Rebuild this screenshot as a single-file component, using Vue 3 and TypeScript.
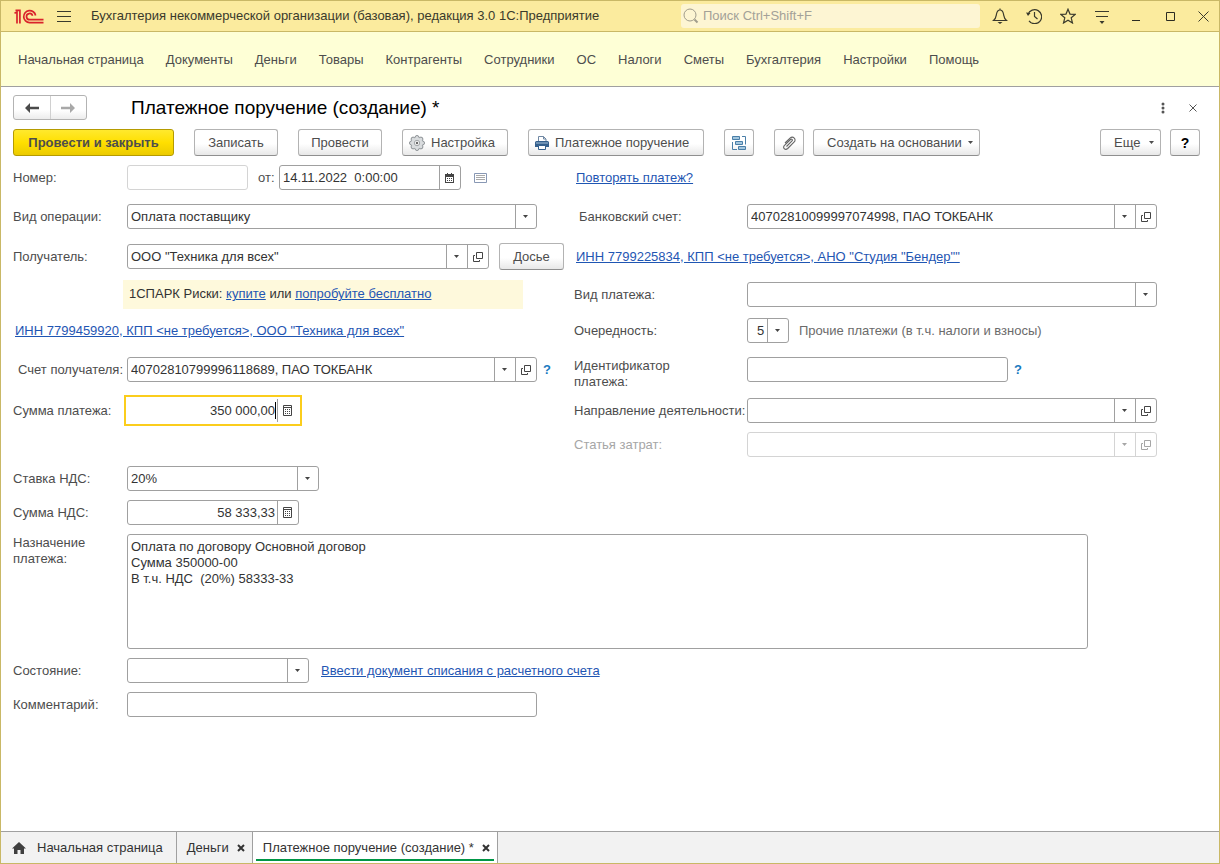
<script setup lang="ts">
import { ref } from 'vue'

const sections: string[] = [
  'Начальная страница', 'Документы', 'Деньги', 'Товары', 'Контрагенты', 'Сотрудники',
  'ОС', 'Налоги', 'Сметы', 'Бухгалтерия', 'Настройки', 'Помощь',
]

const docNumber = ref('')
const docDate = ref('14.11.2022  0:00:00')
const payee = ref('ООО "Техника для всех"')
const payeeAccount = ref('40702810799996118689, ПАО ТОКБАНК')
const bankAccount = ref('40702810099997074998, ПАО ТОКБАНК')
const amount = ref('350 000,00')
const vatAmount = ref('58 333,33')
const identifier = ref('')
const direction = ref('')
const costItem = ref('')
const comment = ref('')
const purpose = ref('Оплата по договору Основной договор\nСумма 350000-00\nВ т.ч. НДС  (20%) 58333-33')
</script>

<template>
  <div class="window">
    <svg class="defs" aria-hidden="true">
      <symbol id="i-down" viewBox="0 0 5 3"><path d="M0 0h5L2.500 3z" fill="currentColor" /></symbol>
      <symbol id="i-open" viewBox="0 0 10 10">
        <path d="M3.500.5h6v6h-6zM2 3.500H.5v6h6V8" fill="none" stroke="currentColor" />
      </symbol>
      <symbol id="i-calc" viewBox="0 0 9 11">
        <path d="M.5.5h8v10h-8zM.5 2.500h8" fill="none" stroke="currentColor" />
        <path d="M2 4h1v1H2zM4 4h1v1H4zM6 4h1v1H6zM2 6h1v1H2zM4 6h1v1H4zM6 6h1v1H6zM2 8h1v1H2zM4 8h1v1H4zM6 8h1v1H6z" fill="currentColor" />
      </symbol>
      <symbol id="i-x" viewBox="0 0 8 8"><path d="M1 1l6 6M7 1L1 7" fill="none" stroke="currentColor" stroke-width="2" /></symbol>
    </svg>

    <header class="titlebar">
      <svg class="logo" viewBox="0 0 30 15" width="30" height="15" fill="none" stroke="#d9232b" stroke-width="1.7">
        <path d="M.5 4.200L3 3v11.500M1.500 1.300h4.400v13.200" />
        <path d="M21.600 6.500A6 6 0 1 0 15.600 13.600H29.500" />
        <path d="M18.600 6.800A3.100 3.100 0 1 0 15.600 10.700H29.500" />
      </svg>
      <button class="burger" aria-label="Меню">
        <svg viewBox="0 0 14 11" width="14" height="11" stroke="#3a3a2c"><path d="M0 .5h14M0 5.500h14M0 10.500h14" /></svg>
      </button>
      <span class="app-name">Бухгалтерия некоммерческой организации (базовая), редакция 3.0 1С:Предприятие</span>
      <label class="search">
        <svg viewBox="0 0 16 16" width="16" height="16" fill="none" stroke="#a09c8c">
          <circle cx="7" cy="7" r="6" /><path d="M11.500 11.500l3 3" stroke-width="2" />
        </svg>
        <input type="search" placeholder="Поиск Ctrl+Shift+F" aria-label="Поиск">
      </label>
      <div class="win-buttons">
        <button aria-label="Уведомления">
          <svg viewBox="0 0 16 16" width="16" height="16" fill="none" stroke="#3a3a2c" stroke-width="1.200">
            <path d="M1.500 12.500h13c-2.500-2-2.500-4-3-6.500C11 3.500 10 2 8 2S5 3.500 4.500 6c-.5 2.500-.5 4.500-3 6.500zM8 .5V2" /><path d="M5.500 14h5L8 16z" fill="#3a3a2c" stroke="none" />
          </svg>
        </button>
        <button aria-label="История">
          <svg viewBox="0 0 16 16" width="16" height="16" fill="none" stroke="#3a3a2c" stroke-width="1.200">
            <path d="M2 6.500A7 7 0 1 1 3 12.800M8.500 4v4.500l3 2.500" /><path d="M0 4.500l4.500.5L2 8z" fill="#3a3a2c" stroke="none" />
          </svg>
        </button>
        <button aria-label="Избранное">
          <svg viewBox="0 0 16 16" width="16" height="16" fill="none" stroke="#3a3a2c" stroke-width="1.200">
            <path d="M8 1.200l2 4.900 5.200.3-4 3.400 1.300 5.200L8 12.200 3.500 15l1.300-5.200-4-3.400L6 6.100z" />
          </svg>
        </button>
        <button aria-label="Настройка панели">
          <svg viewBox="0 0 16 16" width="16" height="16" stroke="#3a3a2c">
            <path d="M1 3.500h14M2 8.500h12" /><path d="M5.500 13h5L8 16z" fill="#3a3a2c" stroke="none" />
          </svg>
        </button>
        <button aria-label="Свернуть">
          <svg viewBox="0 0 16 16" width="16" height="16" stroke="#2c2c22"><path d="M4 12.500h8" /></svg>
        </button>
        <button aria-label="Развернуть">
          <svg viewBox="0 0 16 16" width="16" height="16" fill="none" stroke="#2c2c22"><path d="M4.500 4.500h8v8h-8z" /></svg>
        </button>
        <button aria-label="Закрыть">
          <svg viewBox="0 0 16 16" width="16" height="16" fill="none" stroke="#3a3a2c"><path d="M3.500 3.500l10 10M13.500 3.500l-10 10" /></svg>
        </button>
      </div>
    </header>

    <nav class="sections">
      <a v-for="s in sections" :key="s" href="#">{{ s }}</a>
    </nav>

    <main class="page">
      <div class="heading">
        <div class="history">
          <button aria-label="Назад"><svg viewBox="0 0 14 10" width="14" height="10"><path d="M0 5l5-5v3.800h9v2.400H5V10z" fill="#4a4a4a" /></svg></button>
          <button aria-label="Вперед"><svg viewBox="0 0 14 10" width="14" height="10"><path d="M14 5L9 0v3.800H0v2.400h9V10z" fill="#a8a8a8" /></svg></button>
        </div>
        <h1>Платежное поручение (создание) *</h1>
        <button class="plain" aria-label="Действия"><svg viewBox="0 0 4 12" width="4" height="12" fill="#555"><circle cx="2" cy="2" r="1.500" /><circle cx="2" cy="6" r="1.500" /><circle cx="2" cy="10" r="1.500" /></svg></button>
        <button class="plain" aria-label="Закрыть форму"><svg viewBox="0 0 8 8" width="8" height="8" stroke="#555"><path d="M.5.5l7 7M7.500.5l-7 7" /></svg></button>
      </div>

      <div class="toolbar">
        <button class="btn primary">Провести и закрыть</button>
        <button class="btn short">Записать</button>
        <button class="btn short">Провести</button>
        <button class="btn with-icon">
          <svg viewBox="0 0 16 16" width="16" height="16" fill="#d9dcde" stroke="#8b9094">
            <circle cx="8" cy="2.500" r="2" /><circle cx="11.900" cy="4.100" r="2" /><circle cx="13.500" cy="8" r="2" /><circle cx="11.900" cy="11.900" r="2" />
            <circle cx="8" cy="13.500" r="2" /><circle cx="4.100" cy="11.900" r="2" /><circle cx="2.500" cy="8" r="2" /><circle cx="4.100" cy="4.100" r="2" />
            <circle cx="8" cy="8" r="5.600" stroke="none" /><circle cx="8" cy="8" r="2.700" fill="#f6f6f6" stroke="#a4a8ab" /><circle cx="8" cy="8" r="1.200" fill="#666" stroke="none" />
          </svg>Настройка
        </button>
        <button class="btn with-icon print">
          <svg viewBox="0 0 14 14" width="14" height="14" fill="none">
            <path d="M3.500 6V.5h5l2.500 2.500v3M8.500.5V3H11" stroke="#6f87a3" fill="#fff" />
            <path d="M1.500 5h11a1.500 1.500 0 0 1 1.500 1.500V11H0V6.500A1.500 1.500 0 0 1 1.500 5z" fill="#35608d" />
            <path d="M1 7h12" stroke="#a9c2da" /><path d="M3.500 9.500h7v4h-7z" fill="#fff" stroke="#35608d" />
          </svg>Платежное поручение
        </button>
        <button class="btn square" aria-label="Структура подчиненности">
          <svg viewBox="0 0 14 14" width="14" height="14" fill="none" stroke="#4a7fa8">
            <path d="M10 .5h3.500v8M.5 6v7.500H5" /><path d="M.5.5h7v3h-7zM3.500 5.500h7v3h-7zM6.500 10.500h7v3h-7z" fill="#a3c6de" />
          </svg>
        </button>
        <button class="btn square" aria-label="Присоединенные файлы">
          <svg viewBox="0 0 14 14" width="14" height="14" fill="none" stroke="#666" stroke-width="1.100">
            <path d="M4.500 10.500l5.500-5.500c1-1.200-.4-2.500-1.500-1.500L2.500 9.300c-2.500 2.500.7 5.500 3.200 3.200l6.300-6.300c3-3-1-6.700-4-4L3 7" />
          </svg>
        </button>
        <button class="btn create">Создать на основании<svg class="down"><use href="#i-down" /></svg></button>
        <span class="spacer"></span>
        <button class="btn more">Еще<svg class="down"><use href="#i-down" /></svg></button>
        <button class="btn square help">?</button>
      </div>

      <form class="form" @submit.prevent>
        <div class="columns">
          <div class="column left">
            <div class="line">
              <label for="number">Номер:</label>
              <div class="field number pale"><input id="number" v-model="docNumber"></div>
              <label class="inline" for="date">от:</label>
              <div class="field date">
                <input id="date" v-model="docDate">
                <button type="button" aria-label="Выбрать дату">
                  <svg viewBox="0 0 9 10" width="9" height="10"><path d="M0 1h9v9H0z" fill="#444" /><path d="M1 4h7v5H1z" fill="#fff" /><path d="M2 0h1v2H2zM6 0h1v2H6z" fill="#444" /><path d="M2 5.500h5M2 7.500h5" stroke="#444" stroke-dasharray="1 1" /></svg>
                </button>
              </div>
              <button type="button" class="plain list" aria-label="Журнал">
                <svg viewBox="0 0 13 10" width="13" height="10" fill="none" stroke="#8898b4"><path d="M.5.500h12v9H.5z" /><path d="M2 2.500h9M2 4.500h9M2 6.500h9" stroke="#a9a9a9" /></svg>
              </button>
            </div>
            <div class="line">
              <label for="operation">Вид операции:</label>
              <div class="field grow">
                <select id="operation"><option>Оплата поставщику</option></select>
                <span class="tail"><svg class="down"><use href="#i-down" /></svg></span>
              </div>
              <span class="after"></span>
            </div>
            <div class="line">
              <label for="payee">Получатель:</label>
              <div class="field grow">
                <input id="payee" v-model="payee">
                <button type="button" aria-label="Выбрать получателя"><svg class="down"><use href="#i-down" /></svg></button>
                <button type="button" aria-label="Открыть получателя"><svg class="open"><use href="#i-open" /></svg></button>
              </div>
              <button type="button" class="btn dossier">Досье</button>
            </div>
            <div class="line">
              <p class="spark">1СПАРК Риски: <a href="#">купите</a> или <a href="#">попробуйте бесплатно</a></p>
            </div>
            <div class="line linked"><a href="#">ИНН 7799459920, КПП &lt;не требуется&gt;, ООО "Техника для всех"</a></div>
            <div class="line">
              <label class="indent" for="payee-account">Счет получателя:</label>
              <div class="field grow">
                <input id="payee-account" v-model="payeeAccount">
                <button type="button" aria-label="Выбрать счет"><svg class="down"><use href="#i-down" /></svg></button>
                <button type="button" aria-label="Открыть счет"><svg class="open"><use href="#i-open" /></svg></button>
              </div>
              <button type="button" class="after hint">?</button>
            </div>
            <div class="line">
              <label for="amount">Сумма платежа:</label>
              <div class="field sum active">
                <input id="amount" v-model="amount"><i class="caret"></i>
                <button type="button" aria-label="Калькулятор"><svg class="calc"><use href="#i-calc" /></svg></button>
              </div>
            </div>
            <div class="line"></div>
            <div class="line">
              <label for="vat">Ставка НДС:</label>
              <div class="field rate">
                <select id="vat"><option>20%</option></select>
                <span class="tail"><svg class="down"><use href="#i-down" /></svg></span>
              </div>
            </div>
            <div class="line">
              <label for="vat-amount">Сумма НДС:</label>
              <div class="field sum">
                <input id="vat-amount" v-model="vatAmount"><i class="caret off"></i>
                <button type="button" aria-label="Калькулятор НДС"><svg class="calc"><use href="#i-calc" /></svg></button>
              </div>
            </div>
          </div>

          <div class="column right">
            <div class="line linked"><a href="#">Повторять платеж?</a></div>
            <div class="line">
              <label class="indent" for="bank">Банковский счет:</label>
              <div class="field grow">
                <input id="bank" v-model="bankAccount">
                <button type="button" aria-label="Выбрать банковский счет"><svg class="down"><use href="#i-down" /></svg></button>
                <button type="button" aria-label="Открыть банковский счет"><svg class="open"><use href="#i-open" /></svg></button>
              </div>
            </div>
            <div class="line linked"><a href="#">ИНН 7799225834, КПП &lt;не требуется&gt;, АНО "Студия "Бендер""</a></div>
            <div class="line">
              <label for="kind">Вид платежа:</label>
              <div class="field grow">
                <select id="kind"><option></option></select>
                <span class="tail"><svg class="down"><use href="#i-down" /></svg></span>
              </div>
            </div>
            <div class="line">
              <label for="order">Очередность:</label>
              <div class="field order">
                <select id="order"><option>5</option></select>
                <span class="tail"><svg class="down"><use href="#i-down" /></svg></span>
              </div>
              <span class="note">Прочие платежи (в т.ч. налоги и взносы)</span>
            </div>
            <div class="line tall">
              <label for="ident">Идентификатор<br>платежа:</label>
              <div class="field ident"><input id="ident" v-model="identifier"></div>
              <button type="button" class="after hint">?</button>
            </div>
            <div class="line">
              <label for="direction">Направление деятельности:</label>
              <div class="field grow">
                <input id="direction" v-model="direction">
                <button type="button" aria-label="Выбрать направление"><svg class="down"><use href="#i-down" /></svg></button>
                <button type="button" aria-label="Открыть направление"><svg class="open"><use href="#i-open" /></svg></button>
              </div>
            </div>
            <div class="line disabled">
              <label for="cost">Статья затрат:</label>
              <div class="field grow pale">
                <input id="cost" v-model="costItem" disabled>
                <button type="button" disabled aria-label="Выбрать статью"><svg class="down"><use href="#i-down" /></svg></button>
                <button type="button" disabled aria-label="Открыть статью"><svg class="open"><use href="#i-open" /></svg></button>
              </div>
            </div>
          </div>
        </div>

        <div class="bottom">
          <div class="line tall">
            <label for="purpose">Назначение<br>платежа:</label>
            <textarea id="purpose" v-model="purpose"></textarea>
          </div>
          <div class="line">
            <label for="state">Состояние:</label>
            <div class="field state">
              <select id="state"><option></option></select>
              <span class="tail"><svg class="down"><use href="#i-down" /></svg></span>
            </div>
            <a class="enter" href="#">Ввести документ списания с расчетного счета</a>
          </div>
          <div class="line">
            <label for="comment">Комментарий:</label>
            <div class="field comment"><input id="comment" v-model="comment"></div>
          </div>
        </div>
      </form>
    </main>

    <footer class="tabs">
      <button class="tab home">
        <svg viewBox="0 0 14 12" width="14" height="12" fill="#3f3f3f"><path d="M7 0l7 6.500h-2V12H8.500V8h-3v4H2V6.500H0z" /></svg>Начальная страница
      </button>
      <button class="tab">Деньги<svg class="close"><use href="#i-x" /></svg></button>
      <button class="tab current">Платежное поручение (создание) *<svg class="close"><use href="#i-x" /></svg></button>
    </footer>
  </div>
</template>

<style>
body { margin: 0; }
</style>

<style scoped>
* { box-sizing: border-box; }
.window {
  display: flex; flex-direction: column; min-height: 100vh;
  border: 1px solid #c9b866; background: #fff; color: #4d4d4d;
  font: 13px/16px "Liberation Sans", Arial, sans-serif;
}
button, input, select, textarea { font: inherit; color: inherit; margin: 0; }
button { padding: 0; border: 0; background: none; display: flex; align-items: center; justify-content: center; flex: none; white-space: nowrap; }
svg { display: block; flex: none; }
.defs { position: absolute; width: 0; height: 0; }
.down { width: 5px; height: 3px; }
.open { width: 10px; height: 10px; }
.calc { width: 9px; height: 11px; }

.titlebar { display: flex; align-items: center; height: 31px; padding-left: 13px; background: #fbeb9e; border-bottom: 1px solid #c9b866; color: #3a3a2c; }
.burger { margin-left: 13px; }
.app-name { flex: 1; margin-left: 20px; white-space: nowrap; overflow: hidden; }
.search { display: flex; align-items: center; flex: 0 1 299px; height: 24px; margin-right: 3px; padding-left: 2px; gap: 4px; border-radius: 3px; background: #fdf5d3; }
.search input { flex: 1; min-width: 0; padding: 0; border: 0; outline: 0; background: none; }
.search input::placeholder { color: #a3a198; opacity: 1; }
.win-buttons { display: flex; }
.win-buttons button { width: 34px; height: 30px; }
.win-buttons button:last-child { width: 32px; }

.sections { display: flex; align-items: center; gap: 22px; height: 55px; padding: 1px 17px 0; background: #feffd6; border-bottom: 1px solid #a0a0a0; }
.sections a { color: #4d4d4d; text-decoration: none; white-space: nowrap; }

.page { flex: 1; padding: 8px 19px 0 12px; }
.heading { display: flex; align-items: center; height: 25px; }
.history { display: flex; width: 74px; height: 25px; border: 1px solid #b3b3b3; border-radius: 3px; background: linear-gradient(#fff 60%, #ececec); }
.history button { flex: 1; }
.history button + button { border-left: 1px solid #d0d0d0; }
h1 { flex: 1; margin: 0 0 0 44px; color: #000; font-size: 19px; font-weight: 400; line-height: 24px; }
.plain { width: 30px; height: 24px; }
.heading .plain:last-child { margin-right: -8px; }

.toolbar { display: flex; align-items: center; margin-top: 9px; gap: 20px; }
.btn { height: 27px; padding: 0 13px; border: 1px solid #b3b3b3; border-bottom-color: #8f8f8f; border-radius: 3px; background: linear-gradient(#fff 55%, #e8e8e8); }
.primary { min-width: 161px; border-color: #b59b00; background: linear-gradient(#ffe92e, #ffdf00 50%, #eccb00); font-weight: 700; }
.short { min-width: 84px; padding: 0; }
.with-icon { min-width: 106px; padding: 0 10px 0 6px; gap: 6px; justify-content: flex-start; }
.print { min-width: 176px; }
.square { width: 30px; padding: 0; }
.create { min-width: 167px; margin-left: -11px; padding-right: 6px; justify-content: space-between; }
.more { min-width: 61px; padding-right: 6px; justify-content: space-between; }
.help { margin-left: -11px; color: #000; font-size: 14px; font-weight: 700; }
.spacer { flex: 1; }

.form { padding-top: 9px; }
.columns { display: grid; grid-template-columns: minmax(0, 561fr) minmax(0, 583fr); margin-right: 43px; }
.column { display: grid; grid-template-rows: 39px 40px 38px 36px 39px 41px 34px 34px 34px 34px; align-items: start; }
.left { padding-right: 10px; }
.line { display: flex; align-items: center; height: 25px; }
.line > label { flex: none; width: 114px; white-space: nowrap; }
.right .line > label { width: 173px; }
.line > label.indent { padding-left: 5px; }
.line > label.inline { width: 31px; padding-left: 10px; }
.line.tall { align-items: flex-start; height: auto; }
.tall > label { padding-top: 1px; }
.linked { padding-left: 2px; }
a { color: #1f56b3; white-space: nowrap; }
.disabled { color: #a6a6a6; }

.field { display: flex; flex: none; min-width: 0; height: 25px; border: 1px solid #a0a0a0; border-radius: 3px; background: #fff; color: #333; }
.field input, .field select { flex: 1; min-width: 0; width: 0; padding: 0 0 0 3px; border: 0; outline: 0; background: none; appearance: none; white-space: pre; }
.field button, .tail { display: flex; align-items: center; justify-content: center; flex: none; width: 21px; padding-right: 1px; border-left: 1px solid #a0a0a0; color: #444; }
.tail { pointer-events: none; }
.field.grow { flex: 1; }
.field.pale { border-color: #d4d4d4; }
.field.pale button { border-color: #d4d4d4; color: #a6a6a6; }
.number { width: 121px; }
.date { width: 182px; }
.list { margin-left: 4px; }
.sum { width: 172px; }
.sum input { text-align: right; }
.caret { width: 1px; height: 17px; margin: 3px 1px 0 0; background: #000; }
.caret.off { visibility: hidden; }
.active { border-color: transparent; border-radius: 0; outline: 2px solid #fbcd1c; outline-offset: 1px; }
.rate { width: 192px; }
.order { width: 42px; }
.field.order select { padding-left: 9px; }
.ident { width: 261px; }
.state { width: 182px; }
.comment { width: 410px; }
.after { width: 27px; height: 25px; }
.hint { justify-content: flex-start; padding-left: 6px; color: #1a7abf; font-weight: 700; }
.dossier { margin-left: 10px; width: 65px; padding: 0; }
.note { margin-left: 10px; color: #6b6b6b; white-space: nowrap; }
.spark { flex: 1; margin: 0 41px 0 110px; padding: 6px 6px 7px; background: #fef9dc; color: #333; white-space: nowrap; }
.bottom { display: grid; gap: 9px; }
textarea { flex: 0 1 961px; height: 115px; padding: 4px 3px; border: 1px solid #a0a0a0; border-radius: 3px; outline: 0; resize: none; color: #333; }
.enter { margin-left: 12px; }

.tabs { display: flex; height: 32px; border-top: 1px solid #a0a0a0; background: #f2f2f2; color: #333; }
.tab { padding: 0 7px 0 10px; gap: 8px; border-right: 1px solid #a0a0a0; color: #333; }
.home { padding: 0 13px 0 11px; gap: 11px; }
.close { width: 8px; height: 8px; }
.current { background: linear-gradient(#009646, #009646) center bottom 2px / calc(100% - 6px) 2px no-repeat #fff; }
</style>
